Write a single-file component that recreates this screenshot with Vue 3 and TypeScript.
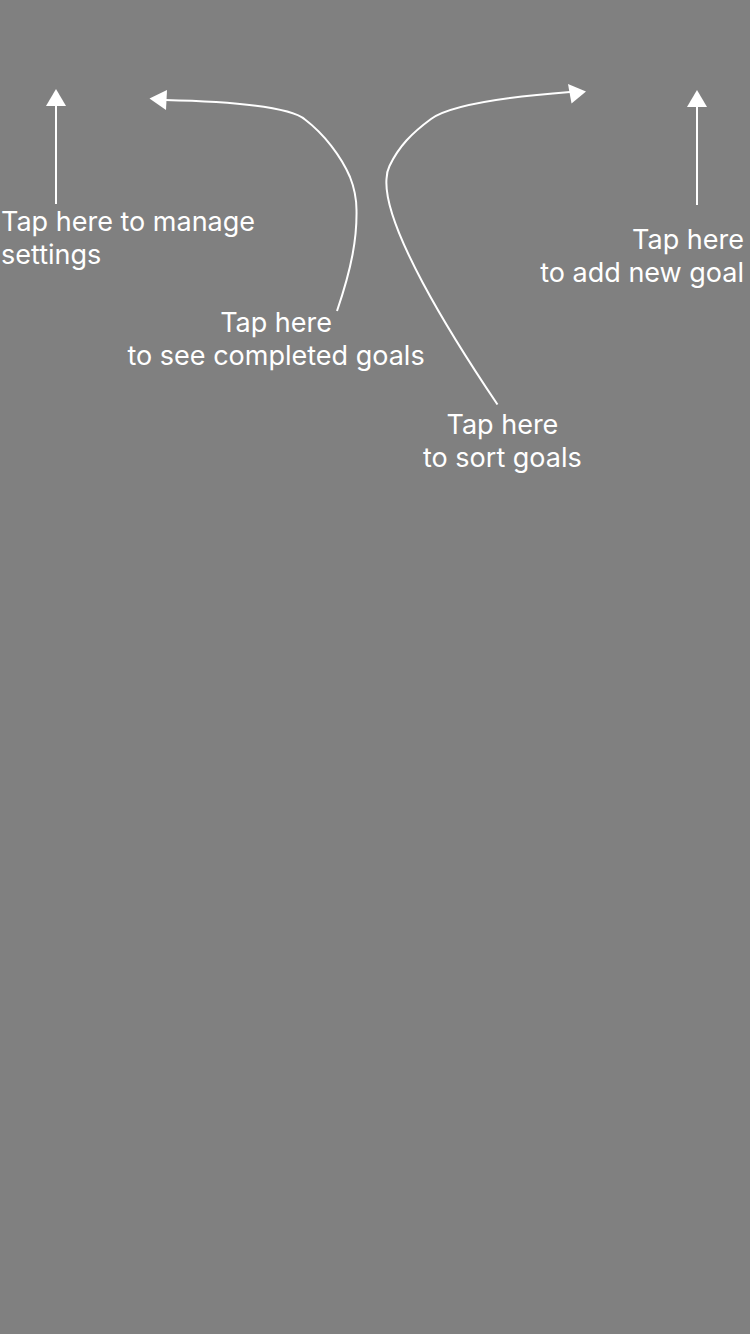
<script setup lang="ts">
interface Arrow {
  id: string
  shaft: string
  head: string
}

const arrows: Arrow[] = [
  { id: 'settings', shaft: 'M56 204V105', head: '56,89 66,106 46,106' },
  {
    id: 'completed',
    shaft: 'M337 311C352 267 357 238 356.500 210C356.400 198 354 187 350 177C341 156 324 134 305 119.500C290 106 228 101.500 165 100',
    head: '149.500,98.500 167,90 166,110',
  },
  {
    id: 'sort',
    shaft: 'M497.500 404.500C450 334 383 226 386.500 179C386.700 174 387.500 170 389.500 166C399 146 412 133 431 119C449 106 505 97 570 92',
    head: '586,91.500 568,84 571.500,103.500',
  },
  { id: 'add', shaft: 'M697 205V106', head: '697,90 707,107 687,107' },
]
</script>

<template>
  <main class="coach">
    <svg class="arrows" viewBox="0 0 750 480" aria-hidden="true">
      <g v-for="arrow in arrows" :key="arrow.id">
        <path class="shaft" :d="arrow.shaft" />
        <polygon class="head" :points="arrow.head" />
      </g>
    </svg>
    <div class="top">
      <p class="hint settings">Tap here to manage<br />settings</p>
      <p class="hint add">Tap here<br />to add new goal</p>
    </div>
    <p class="hint completed">Tap here<br />to see completed goals</p>
    <p class="hint sort">Tap here<br />to sort goals</p>
  </main>
</template>

<style>
body {
  margin: 0;
  background: #808080;
}
</style>

<style scoped>
.coach {
  position: relative;
  box-sizing: border-box;
  min-height: 100vh;
  padding-top: 205px;
  background: #808080;
  color: #fff;
  font-family: Inter, "Liberation Sans", sans-serif;
  font-size: 27px;
  font-weight: 400;
  line-height: 33px;
}
.arrows {
  position: absolute;
  top: 0;
  left: 0;
  width: 100%;
}
.shaft {
  fill: none;
  stroke: #fff;
  stroke-width: 2;
}
.head {
  fill: #fff;
}
.top {
  display: flex;
  justify-content: space-between;
  padding: 0 6px 0 1px;
}
.hint {
  width: fit-content;
  margin: 0;
  white-space: nowrap;
}
.add {
  margin-top: 18px;
  text-align: right;
}
.completed {
  margin: 17px 0 0 17%;
  text-align: center;
}
.sort {
  margin: 36px 0 0 56.4%;
  text-align: center;
}
</style>
